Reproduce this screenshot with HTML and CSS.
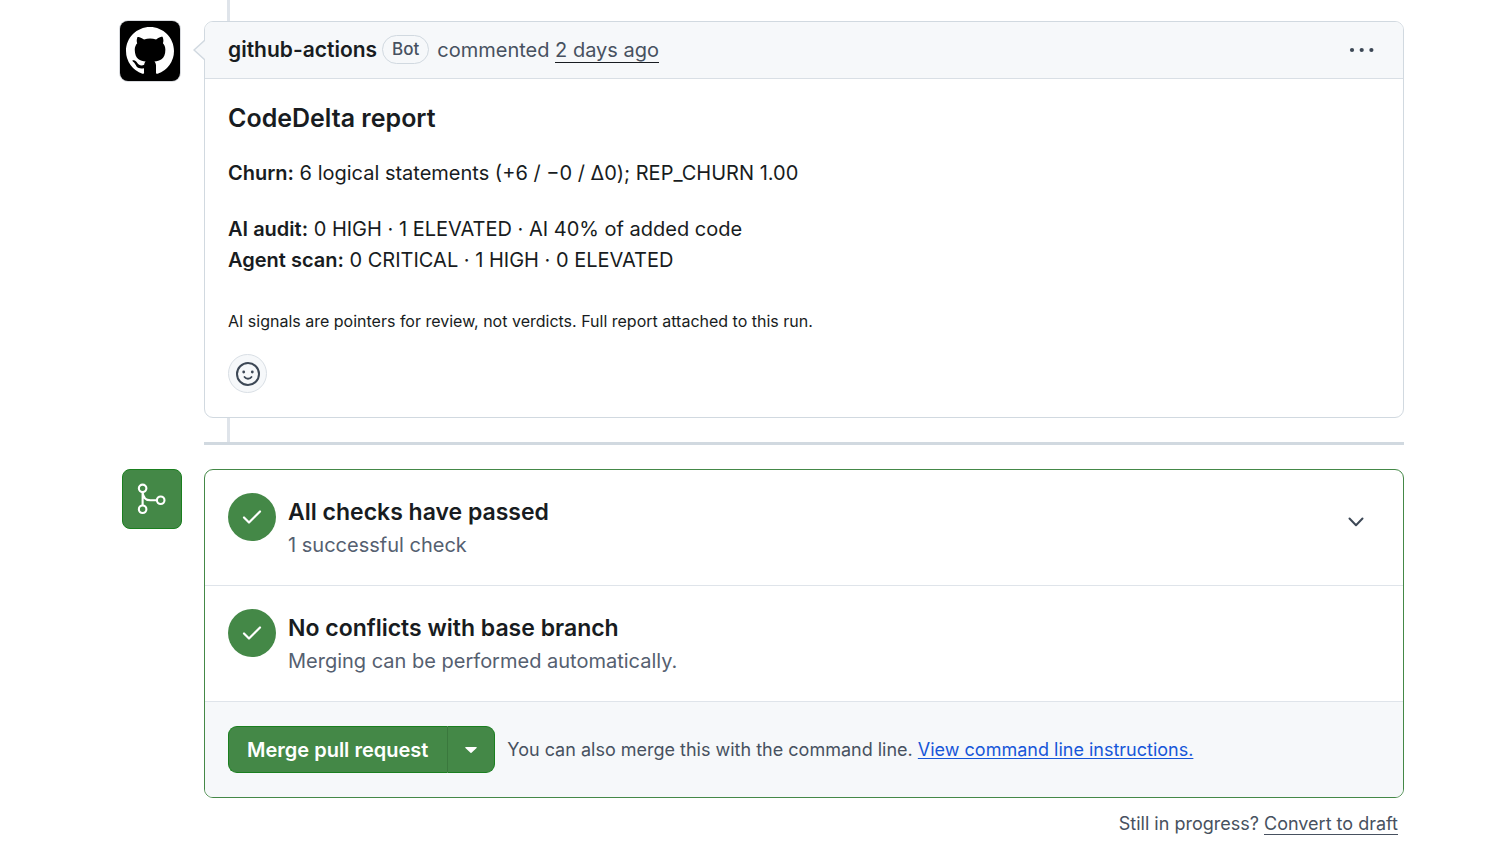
FILE: index.html
```html
<!DOCTYPE html>
<html lang="en">
<head>
    <meta charset="UTF-8">
    <meta name="viewport" content="width=device-width, initial-scale=1.0">
    <title>Pull request - CodeDelta report</title>
    <link rel="stylesheet" href="styles.css">
</head>
<body>
    <main class="page">
        <div class="timeline">
            <div class="timeline-item">
                <div class="avatar">
                    <svg width="48" height="48" viewBox="0 0 16 16" fill="#fff" role="img" aria-label="github-actions">
                        <path d="M8 0c4.42 0 8 3.58 8 8a8.013 8.013 0 0 1-5.45 7.59c-.4.08-.55-.17-.55-.38 0-.27.01-1.13.01-2.2 0-.75-.25-1.23-.54-1.48 1.78-.2 3.65-.88 3.65-3.95 0-.88-.31-1.59-.82-2.15.08-.2.36-1.02-.08-2.12 0 0-.67-.22-2.2.82-.64-.18-1.32-.27-2-.27-.68 0-1.36.09-2 .27-1.53-1.03-2.2-.82-2.2-.82-.44 1.1-.16 1.92-.08 2.12-.51.56-.82 1.28-.82 2.15 0 3.06 1.86 3.75 3.64 3.95-.23.2-.44.55-.51 1.07-.46.21-1.61.55-2.33-.66-.15-.24-.6-.83-1.23-.82-.67.01-.27.38.01.53.34.19.73.9.82 1.13.16.45.68 1.31 2.69.94 0 .67.01 1.3.01 1.49 0 .21-.15.45-.55.38A7.995 7.995 0 0 1 0 8c0-4.42 3.58-8 8-8Z"/>
                    </svg>
                </div>
                <article class="comment">
                    <header class="comment-header">
                        <svg class="comment-arrow" width="12" height="22" viewBox="0 0 12 22">
                            <path d="M12 1 1 11l11 10" fill="#f6f8fa" stroke="#d1d9e0" stroke-width="1.5"/>
                        </svg>
                        <strong class="author">github-actions</strong>
                        <span class="label">Bot</span>
                        <span class="commented">commented <a href="#" class="timestamp">2 days ago</a></span>
                        <button type="button" class="icon-button" aria-label="Show options">
                            <svg width="26" height="8" viewBox="0 0 26 8" fill="#3d4856">
                                <circle cx="3" cy="4" r="2.1"/>
                                <circle cx="12.7" cy="4" r="2.1"/>
                                <circle cx="22.4" cy="4" r="2.1"/>
                            </svg>
                        </button>
                    </header>
                    <div class="comment-body">
                        <h3>CodeDelta report</h3>
                        <p><strong>Churn:</strong> 6 logical statements (+6 / −0 / Δ0); REP_CHURN 1.00</p>
                        <p><strong>AI audit:</strong> 0 HIGH · 1 ELEVATED · AI 40% of added code<br>
                        <strong>Agent scan:</strong> 0 CRITICAL · 1 HIGH · 0 ELEVATED</p>
                        <p class="note">AI signals are pointers for review, not verdicts. Full report attached to this run.</p>
                        <button type="button" class="reaction" aria-label="Add reaction">
                            <svg width="24" height="24" viewBox="0 0 24 24" fill="none" stroke="#3d4856" stroke-width="2" stroke-linecap="round">
                                <circle cx="12" cy="12" r="11"/>
                                <path d="M8.5 15c1.6 2.3 5.4 2.3 7 0" stroke-width="1.8"/>
                                <circle cx="7.7" cy="10" r="1.4" fill="#3d4856" stroke="none"/>
                                <circle cx="16.3" cy="10" r="1.4" fill="#3d4856" stroke="none"/>
                            </svg>
                        </button>
                    </div>
                </article>
            </div>
        </div>

        <section class="merge">
            <div class="merge-badge">
                <svg width="60" height="60" viewBox="0 0 60 60" fill="none" stroke="#fff" stroke-width="2.2">
                    <circle cx="20.3" cy="19" r="3.9"/>
                    <circle cx="20.3" cy="40.6" r="3.9"/>
                    <circle cx="39" cy="31.3" r="3.9"/>
                    <path d="M20.3 22.9v13.800M20.300 23.300c.6 5 3.400 8 8 8H35"/>
                </svg>
            </div>
            <div class="merge-main">
                <div class="merge-box">
                    <div class="check-row">
                        <span class="check-icon">
                            <svg width="20" height="16" viewBox="0 0 20 16" fill="none" stroke="#fff" stroke-width="2.2" stroke-linecap="round" stroke-linejoin="round">
                                <path d="m2 8.500 5 5L18 2.500"/>
                            </svg>
                        </span>
                        <div class="check-text">
                            <h3>All checks have passed</h3>
                            <p>1 successful check</p>
                        </div>
                        <button type="button" class="icon-button expand" aria-label="Expand checks">
                            <svg width="16" height="10" viewBox="0 0 16 10" fill="none" stroke="#3d4856" stroke-width="2" stroke-linecap="round" stroke-linejoin="round">
                                <path d="m1.500 1.500 6.500 6.700 6.500-6.700"/>
                            </svg>
                        </button>
                    </div>
                    <div class="check-row">
                        <span class="check-icon">
                            <svg width="20" height="16" viewBox="0 0 20 16" fill="none" stroke="#fff" stroke-width="2.2" stroke-linecap="round" stroke-linejoin="round">
                                <path d="m2 8.500 5 5L18 2.500"/>
                            </svg>
                        </span>
                        <div class="check-text">
                            <h3>No conflicts with base branch</h3>
                            <p>Merging can be performed automatically.</p>
                        </div>
                    </div>
                    <div class="merge-footer">
                        <div class="button-group">
                            <button type="button" class="merge-button">Merge pull request</button>
                            <button type="button" class="merge-options" aria-label="Select merge method">
                                <svg width="12" height="6" viewBox="0 0 12 6" fill="#fff">
                                    <path d="M.8 0h10.400c.6 0 .8.600.4 1L6.500 5.800a.7.700 0 0 1-1 0L.4 1C0 .6.200 0 .8 0Z"/>
                                </svg>
                            </button>
                        </div>
                        <p>You can also merge this with the command line. <a href="#">View command line instructions.</a></p>
                    </div>
                </div>
                <p class="draft">Still in progress? <a href="#">Convert to draft</a></p>
            </div>
        </section>
    </main>
</body>
</html>
```

FILE: styles.css
```css
* {
    box-sizing: border-box;
}
body {
    margin: 0;
    background-color: #fff;
    color: #181c21;
    font-family: Inter, "Liberation Sans", sans-serif;
    font-size: 20px;
    line-height: 30px;
}
h3, p {
    margin: 0;
}
strong, h3 {
    font-weight: 600;
}
svg {
    display: block;
}
button {
    font-family: inherit;
    cursor: pointer;
}
.page {
    padding: 0 108px 0 120px;
}

/* Comment */
.timeline {
    position: relative;
    padding: 21px 0 24px;
}
.timeline::before {
    content: "";
    position: absolute;
    top: 0;
    bottom: 0;
    left: 107px;
    width: 3px;
    background-color: #dfe4ea;
}
.timeline-item, .merge {
    display: flex;
    gap: 24px;
}
.avatar, .merge-badge {
    flex: none;
    display: flex;
    align-items: center;
    justify-content: center;
    width: 60px;
    height: 60px;
    border-radius: 8px;
}
.avatar {
    background-color: #000;
    box-shadow: 0 0 0 1px #d8dade;
}
.comment {
    position: relative;
    flex: 1;
    background-color: #fff;
    border: 1px solid #d1d9e0;
    border-radius: 9px;
}
.comment-header {
    position: relative;
    display: flex;
    align-items: center;
    height: 57px;
    padding: 0 24px 1px 23px;
    background-color: #f6f8fa;
    border-bottom: 1px solid #d9dfe5;
    border-radius: 8px 8px 0 0;
    color: #475160;
}
.comment-arrow {
    position: absolute;
    left: -12px;
    top: 17px;
}
.author {
    color: #181c21;
    font-size: 21px;
}
.label {
    margin: 0 8px 0 5px;
    padding: 0 9px;
    border: 1px solid #d1d9e0;
    border-radius: 15px;
    font-size: 17px;
    font-weight: 500;
    line-height: 27px;
}
.timestamp {
    color: inherit;
    text-decoration: none;
    border-bottom: 1px solid #181c21;
}
.icon-button {
    margin-left: auto;
    padding: 4px;
    background: none;
    border: none;
}
.comment-body {
    padding: 24px 23px;
    line-height: 31px;
}
.comment-body h3 {
    margin-bottom: 24px;
    font-size: 25px;
}
.comment-body p {
    margin-bottom: 25px;
}
.comment-body .note {
    margin-bottom: 17px;
    padding-top: 5px;
    font-size: 16px;
}
.reaction {
    display: flex;
    align-items: center;
    justify-content: center;
    width: 39px;
    height: 39px;
    padding: 0;
    background-color: #f6f8fa;
    border: 1px solid #d9dfe5;
    border-radius: 50%;
}

/* Merge box */
.merge {
    position: relative;
    padding-top: 27px;
}
.merge::before {
    content: "";
    position: absolute;
    top: 0;
    left: 84px;
    right: 0;
    height: 3px;
    background-color: #d1d9e0;
}
.merge-badge {
    margin: 0 -2px 0 2px;
    background-color: #448847;
    border: 1px solid #1a7f1f;
}
.merge-main {
    flex: 1;
}
.merge-box {
    border: 1px solid #448847;
    border-radius: 9px;
}
.check-row {
    display: flex;
    align-items: flex-start;
    gap: 12px;
    padding: 23px;
    border-bottom: 1px solid #dfe4ea;
}
.check-icon {
    flex: none;
    display: flex;
    align-items: center;
    justify-content: center;
    width: 48px;
    height: 48px;
    border-radius: 50%;
    background-color: #448847;
}
.check-text {
    padding: 4px 0 2px;
}
.check-text h3 {
    font-size: 23px;
}
.check-text p {
    padding-top: 3px;
    color: #556070;
}
.expand {
    margin-top: 20px;
    margin-right: 12px;
}
.merge-footer {
    display: flex;
    align-items: center;
    gap: 12px;
    padding: 24px 23px;
    background-color: #f6f8fa;
    border-radius: 0 0 8px 8px;
    color: #475160;
    font-size: 18px;
}
.merge-footer a {
    color: #1656d8;
    text-underline-offset: 2px;
}
.button-group {
    display: flex;
    height: 47px;
}
.merge-button, .merge-options {
    background-color: #448847;
    border: 1px solid #1a7f1f;
    color: #fff;
    font-size: 20px;
    font-weight: 600;
}
.merge-button {
    padding: 0 19px 0 18px;
    border-right: none;
    border-radius: 9px 0 0 9px;
}
.merge-options {
    padding: 0 17px;
    border-left-color: #3a783d;
    border-radius: 0 9px 9px 0;
}
.draft {
    padding: 11px 6px 0;
    color: #475160;
    font-size: 18px;
    text-align: right;
}
.draft a {
    color: inherit;
    text-decoration: none;
    border-bottom: 1px solid #475160;
}
```
